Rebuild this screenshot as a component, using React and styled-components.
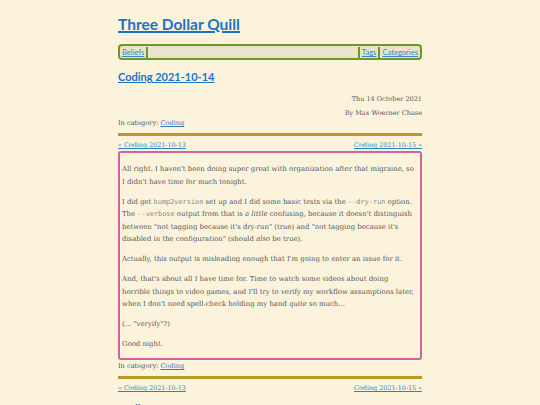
import React from "react";
import styled, { createGlobalStyle } from "styled-components";

const Global = createGlobalStyle`
  html, body {
    margin: 0;
    padding: 0;
    background: #fcf3dc;
  }
  body {
    font-family: "DejaVu Serif", "Liberation Serif", serif;
    color: #555;
  }
`;

const Page = styled.div`
  width: 304px;
  margin: 0 auto;
  padding-top: 14px;
`;

const SiteTitle = styled.h1`
  margin: 0;
  font-family: Lato, "Open Sans", sans-serif;
  font-weight: 700;
  font-size: 15.5px;
  line-height: 20px;
  a {
    color: #1a74c6;
    text-decoration-thickness: 1.5px;
    text-underline-offset: 1px;
  }
`;

const NavBar = styled.nav`
  margin-top: 10px;
  height: 16px;
  box-sizing: border-box;
  border: 2px solid #6b9a22;
  border-radius: 4px;
  background: #ebe3cc;
  display: flex;
  align-items: center;
  padding: 0 1px;
  font-family: Lato, "Open Sans", sans-serif;
  font-size: 7.6px;
`;

const NavLink = styled.a`
  color: #3a86c8;
  text-decoration: underline;
  padding: 0 1px;
`;

const NavSep = styled.span`
  width: 2px;
  height: 11px;
  background: #6b9a22;
  margin: 0 1px;
`;

const Spacer = styled.span`
  flex: 1;
`;

const PostTitle = styled.h2`
  margin: ${(p) => p.$top}px 0 0;
  font-family: Lato, "Open Sans", sans-serif;
  font-weight: 700;
  font-size: 11px;
  line-height: 16px;
  a {
    color: #1a74c6;
  }
`;

const Meta = styled.div`
  margin-top: 7px;
  text-align: right;
  font-size: 6.5px;
  line-height: 14px;
`;

const Category = styled.div`
  font-size: 6.6px;
  line-height: 12px;
  margin-top: ${(p) => p.$top || 0}px;
  a {
    color: #2f7fc2;
  }
`;

const Rule = styled.hr`
  margin: 4px 0 0;
  border: none;
  height: 3px;
  background: #bb9a2a;
`;

const PrevNext = styled.div`
  display: flex;
  justify-content: space-between;
  margin-top: 3px;
  font-size: 6.4px;
  line-height: 12px;
  a {
    color: #2f7fc2;
  }
`;

const Article = styled.article`
  border: 2px solid #d0629f;
  border-radius: 3px;
  padding: 4px 4.4px 0 2px;
`;

const Para = styled.p`
  margin: 6px 0 7.5px;
  font-size: 6.9px;
  line-height: 12.5px;
  color: #555;
`;

const Code = styled.code`
  font-family: "DejaVu Sans Mono", "Liberation Mono", monospace;
  font-size: 6.9px;
  line-height: 1;
  color: #8a8a8a;
`;

function PostNav() {
  return (
    <PrevNext>
      <a href="#">« Coding 2021-10-13</a>
      <a href="#">Coding 2021-10-15 »</a>
    </PrevNext>
  );
}

export default function App() {
  return (
    <>
      <Global />
      <Page>
        <SiteTitle>
          <a href="#">Three Dollar Quill</a>
        </SiteTitle>
        <NavBar>
          <NavLink href="#">Beliefs</NavLink>
          <NavSep />
          <Spacer />
          <NavSep />
          <NavLink href="#">Tags</NavLink>
          <NavSep />
          <NavLink href="#">Categories</NavLink>
        </NavBar>

        <PostTitle $top={9}>
          <a href="#">Coding 2021-10-14</a>
        </PostTitle>
        <Meta>
          Thu 14 October 2021
          <br />
          By Max Woerner Chase
        </Meta>
        <Category $top={-3}>
          In category: <a href="#">Coding</a>
        </Category>
        <Rule />
        <PostNav />

        <Article>
          <Para>
            All right. I haven't been doing super great with organization after
            that migraine, so I didn't have time for much tonight.
          </Para>
          <Para>
            I did get <Code>bump2version</Code> set up and I did some basic
            tests via the <Code>--dry-run</Code> option. The{" "}
            <Code>--verbose</Code> output from that is <em>a little</em>{" "}
            confusing, because it doesn't distinguish between "not tagging
            because it's dry-run" (true) and "not tagging because it's disabled
            in the configuration" (should <em>also</em> be true).
          </Para>
          <Para>
            Actually, this output is misleading enough that I'm going to enter
            an issue for it.
          </Para>
          <Para>
            And, that's about all I have time for. Time to watch some videos
            about doing horrible things to video games, and I'll try to verify
            my workflow assumptions later, when I don't need spell-check holding
            my hand <em>quite</em> so much...
          </Para>
          <Para>(... "veryify"?)</Para>
          <Para>Good night.</Para>
        </Article>

        <Category $top={0}>
          In category: <a href="#">Coding</a>
        </Category>
        <Rule />
        <PostNav />

        <PostTitle $top={7}>
          <a href="#">Coding 2021-10-13</a>
        </PostTitle>
      </Page>
    </>
  );
}
